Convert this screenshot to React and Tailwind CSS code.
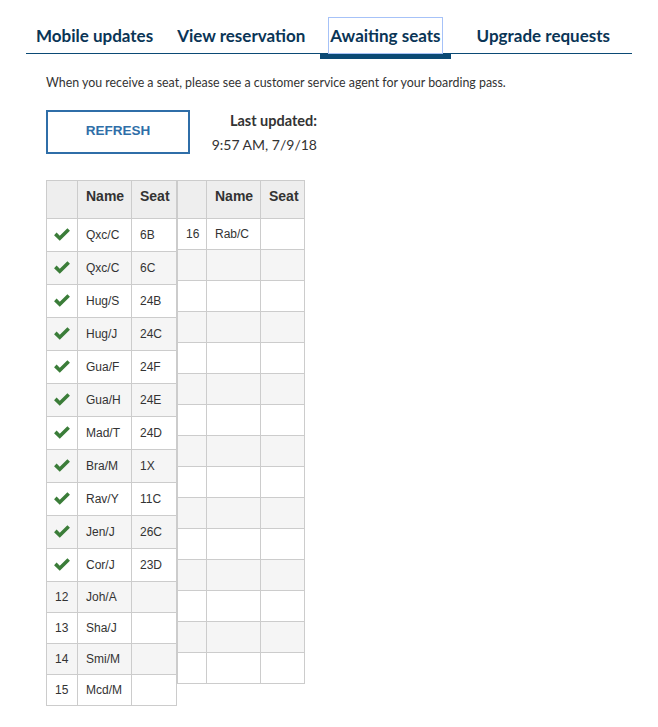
import React from 'react';

const tabs = [
    { label: 'Mobile updates', cls: 'ml-0' },
    { label: 'View reservation', cls: 'ml-[4px]' },
    { label: 'Awaiting seats', cls: 'ml-[5px]', active: true },
    { label: 'Upgrade requests', cls: 'ml-[16px]' },
];

const seated = [
    ['Qxc/C', '6B'],
    ['Qxc/C', '6C'],
    ['Hug/S', '24B'],
    ['Hug/J', '24C'],
    ['Gua/F', '24F'],
    ['Gua/H', '24E'],
    ['Mad/T', '24D'],
    ['Bra/M', '1X'],
    ['Rav/Y', '11C'],
    ['Jen/J', '26C'],
    ['Cor/J', '23D'],
];

const waiting = [
    ['12', 'Joh/A'],
    ['13', 'Sha/J'],
    ['14', 'Smi/M'],
    ['15', 'Mcd/M'],
];

const Check = () => (
    <svg width="18" height="15" viewBox="0 0 17 14" className="block">
        <path d="M1 7.6 L3.4 5.2 L6.4 8.2 L13.6 1 L16 3.4 L6.4 13 Z" fill="#3b7d39" />
    </svg>
);

const cell = 'border border-[#cccccc] px-2 text-left align-middle';

const HeaderRow = ({ first }) => (
    <tr className="h-[38px] bg-[#eeeeee]">
        <th className={`${cell} ${first}`}></th>
        <th className={`${cell} w-[54px] font-bold text-[14px] pb-[5px]`}>Name</th>
        <th className={`${cell} font-bold text-[14px] pb-[5px]`}>Seat</th>
    </tr>
);

const LeftTable = () => (
    <table className="border-collapse text-[12px] text-[#333333] w-[131px] table-fixed">
        <thead>
            <HeaderRow first="w-[31px]" />
        </thead>
        <tbody>
            {seated.map(([name, seat], i) => (
                <tr key={`s-${i}`} className={`h-[33px] ${i % 2 ? 'bg-[#f5f5f5]' : 'bg-white'}`}>
                    <td className={`${cell} px-[6px]`}><Check /></td>
                    <td className={cell}>{name}</td>
                    <td className={cell}>{seat}</td>
                </tr>
            ))}
            {waiting.map(([num, name], i) => (
                <tr key={`w-${i}`} className={`h-[31px] ${(i + seated.length) % 2 ? 'bg-[#f5f5f5]' : 'bg-white'}`}>
                    <td className={cell}>{num}</td>
                    <td className={cell}>{name}</td>
                    <td className={cell}></td>
                </tr>
            ))}
        </tbody>
    </table>
);

const RightTable = () => {
    const rows = Array.from({ length: 15 }, (_, i) => (i === 0 ? ['16', 'Rab/C'] : ['', '']));
    return (
        <table className="border-collapse text-[12px] text-[#333333] w-[128px] table-fixed">
            <thead>
                <HeaderRow first="w-[29px]" />
            </thead>
            <tbody>
                {rows.map(([num, name], i) => (
                    <tr key={`r-${i}`} className={`h-[31px] ${i % 2 ? 'bg-[#f5f5f5]' : 'bg-white'}`}>
                        <td className={cell}>{num}</td>
                        <td className={cell}>{name}</td>
                        <td className={cell}></td>
                    </tr>
                ))}
            </tbody>
        </table>
    );
};

export default function App() {
    return (
        <div className="w-[658px] min-h-[727px] bg-white font-['Lato','Liberation_Sans',sans-serif]">
            {/* tab bar */}
            <div className="mx-[26px] pt-[18px] border-b-[1.5px] border-[#0b4a75] flex">
                {tabs.map((t) => (
                    <div key={t.label} className={`${t.cls} relative px-[10px]`}>
                        <div
                            className={`h-[35px] flex items-center text-[17px] font-bold text-[#0a3556] ${
                                t.active ? 'outline outline-1 outline-[#a6c2f8] px-[1px] -mx-[1px]' : ''
                            }`}
                        >
                            {t.label}
                        </div>
                        {t.active && <div className="absolute left-0 right-0 -bottom-[6px] h-[5px] bg-[#0b4a75]" />}
                    </div>
                ))}
            </div>

            <div className="px-[46px]">
                <p className="mt-[20px] text-[12.4px] text-[#333333]">
                    When you receive a seat, please see a customer service agent for your boarding pass.
                </p>

                <div className="mt-[17px] flex items-start">
                    <button className="w-[144px] h-[44px] border-2 border-[#2f6ea8] text-[#2f6ea8] font-['Liberation_Sans',sans-serif] font-bold text-[13.5px]">
                        REFRESH
                    </button>
                    <div className="ml-[10px] w-[117px] pt-[1px] text-right text-[#333333]">
                        <div className="font-bold text-[14.5px] leading-[20px]">Last updated:</div>
                        <div className="text-[14px] leading-[20px] mt-[4px]">9:57 AM, 7/9/18</div>
                    </div>
                </div>

                <div className="mt-[25px] flex items-start font-['Liberation_Sans',sans-serif]">
                    <LeftTable />
                    <RightTable />
                </div>
            </div>
        </div>
    );
}
